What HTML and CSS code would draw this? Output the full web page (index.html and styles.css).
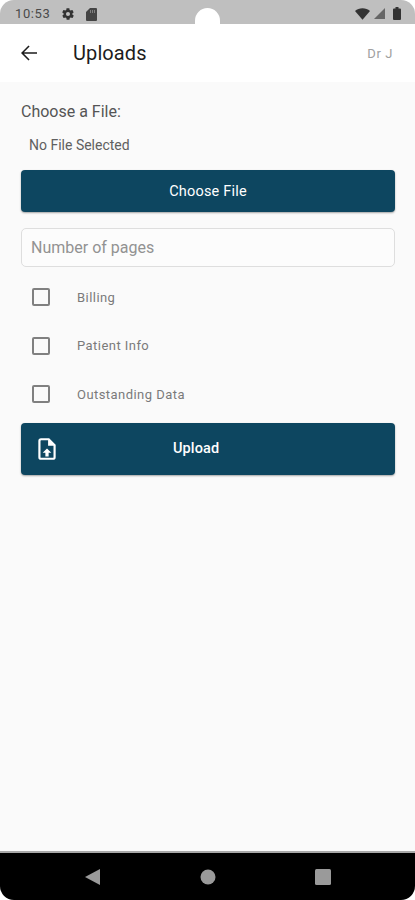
FILE: index.html
```html
<!DOCTYPE html>
<html lang="en">
<head>
<meta charset="utf-8">
<title>Uploads</title>
<link rel="stylesheet" href="styles.css">
</head>
<body>
<div class="screen">
  <div class="status">
    <div class="status-left">
      <span class="time">10:53</span>
      <svg class="s-icon" width="14" height="14" viewBox="0 0 24 24"><path fill="#333" d="M19.4 13c.1-.3.1-.7.1-1s0-.7-.1-1l2.1-1.600c.2-.2.2-.4.1-.6l-2-3.500c-.1-.2-.4-.3-.6-.2l-2.500 1c-.5-.4-1.100-.7-1.700-1l-.4-2.600c0-.3-.2-.5-.5-.5h-4c-.3 0-.5.2-.5.5l-.4 2.600c-.6.300-1.200.6-1.700 1l-2.500-1c-.2-.1-.5 0-.6.2l-2 3.500c-.1.200-.1.400.1.600L4.600 11c-.1.300-.1.700-.1 1s0 .7.100 1l-2.100 1.600c-.2.2-.2.400-.1.600l2 3.500c.1.200.4.300.6.200l2.500-1c.5.400 1.100.7 1.700 1l.4 2.600c0 .3.2.5.5.5h4c.3 0 .5-.2.5-.5l.4-2.600c.6-.3 1.200-.6 1.700-1l2.500 1c.2.100.5 0 .6-.2l2-3.500c.1-.2.1-.4-.1-.6zM12 15.500a3.500 3.500 0 1 1 0-7 3.500 3.500 0 0 1 0 7z"/></svg>
      <svg class="s-icon" width="11" height="14" viewBox="0 0 11 14"><path fill="#444" d="M4 1h6a1 1 0 0 1 1 1v11a1 1 0 0 1-1 1H1a1 1 0 0 1-1-1V5z"/><path stroke="#999" stroke-width=".7" d="M4.500 3v3M6.500 3v3M8.500 3v3"/></svg>
    </div>
    <div class="status-right">
      <svg width="15" height="12" viewBox="0 0 15 12"><path fill="#333" d="M0 3C2 1.200 4.600.3 7.500.3s5.500.9 7.500 2.700l-7.500 8.700z"/></svg>
      <svg class="signal" width="11" height="11" viewBox="0 0 11 11"><path fill="#666" d="M11 0v11H0z"/></svg>
      <svg class="battery" width="8" height="13" viewBox="0 0 8 13"><path fill="#333" d="M2.500 0h3v1.500H7a1 1 0 0 1 1 1V12a1 1 0 0 1-1 1H1a1 1 0 0 1-1-1V2.500a1 1 0 0 1 1-1h1.500z"/></svg>
    </div>
    <span class="notch"></span>
  </div>

  <header class="appbar">
    <svg class="back" width="24" height="24" viewBox="0 0 24 24"><path fill="#1c1c1c" d="M20 11.200H6.900l5.700-5.700L11.500 4.400 4 12l7.500 7.600 1.100-1.100-5.700-5.700H20z"/></svg>
    <h1 class="title">Uploads</h1>
    <span class="user">Dr J</span>
  </header>

  <main class="content">
    <p class="choose-label">Choose a File:</p>
    <p class="file-name">No File Selected</p>
    <button class="btn btn-choose">Choose File</button>
    <div class="field">Number of pages</div>
    <ul class="checks">
      <li class="check"><span class="box"></span><span class="check-label">Billing</span></li>
      <li class="check"><span class="box"></span><span class="check-label">Patient Info</span></li>
      <li class="check"><span class="box"></span><span class="check-label">Outstanding Data</span></li>
    </ul>
    <button class="btn btn-upload">
      <svg class="upload-icon" width="26" height="26" viewBox="0 0 24 24"><path fill="#fff" d="M14 2H6.500A2.500 2.500 0 0 0 4 4.500v15A2.500 2.500 0 0 0 6.500 22h11a2.500 2.500 0 0 0 2.500-2.500V8zm4 17.500a.5.5 0 0 1-.5.5h-11a.5.5 0 0 1-.5-.5v-15a.5.500 0 0 1 .5-.5H13v5h5z"/><path fill="#fff" d="M12 11.500 8 15.500h2.500V19h3v-3.500H16z"/></svg>
      <span class="upload-text">Upload</span>
    </button>
  </main>

  <nav class="navbar">
    <svg width="16" height="16" viewBox="0 0 16 16"><path fill="#9a9a9a" d="M15 0v16L0 8z"/></svg>
    <svg width="16" height="16" viewBox="0 0 16 16"><circle fill="#9a9a9a" cx="8" cy="8" r="7.500"/></svg>
    <svg width="16" height="16" viewBox="0 0 16 16"><rect fill="#9a9a9a" width="16" height="16" rx="1.500"/></svg>
  </nav>
</div>
</body>
</html>
```

FILE: styles.css
```css
* { box-sizing: border-box; }
html, body { margin: 0; padding: 0; }
body { font-family: Roboto, "Liberation Sans", sans-serif; background: #fff; }
.screen { width: 415px; height: 900px; display: flex; flex-direction: column; overflow: hidden; background: #fff; }

.status {
  position: relative;
  height: 24px;
  flex: none;
  background: #bfbfbf;
  border-radius: 14px 14px 0 0;
  display: flex;
  justify-content: space-between;
  align-items: center;
  padding: 3px 14px 0 15px;
}
.status-left { display: flex; align-items: center; gap: 11px; }
.status-right { display: flex; align-items: center; gap: 4px; }
.battery { margin-left: 4px; }
.time { font-size: 13px; color: #4a4a4a; letter-spacing: .6px; }
.s-icon { display: block; }
.notch {
  position: absolute;
  left: 195px;
  top: 8px;
  width: 25px;
  height: 26px;
  border-radius: 13px 13px 0 0;
  background: #fff;
}

.appbar {
  height: 58px;
  flex: none;
  background: #fff;
  display: flex;
  align-items: center;
  padding: 0 22px 0 17px;
}
.back { flex: none; }
.title { margin: 0 0 0 32px; font-size: 20px; font-weight: 400; letter-spacing: .1px; color: #1d1d1d; flex: 1; }
.user { font-size: 13px; color: #a0a0a0; letter-spacing: .6px; }

.content {
  flex: 1;
  background: #fafafa;
  padding: 20px 20px 0 21px;
  display: flex;
  flex-direction: column;
}
.choose-label { margin: 0; font-size: 16px; line-height: 19px; color: #555; }
.file-name { margin: 16px 0 0 8px; font-size: 14px; line-height: 16px; color: #606060; }
.btn {
  display: flex;
  align-items: center;
  width: 100%;
  border: 0;
  background: #0d4660;
  color: #fff;
  font-family: inherit;
  font-weight: 500;
  border-radius: 4px;
  box-shadow: 0 1px 2px rgba(0,0,0,.35);
  padding: 0;
}
.btn-choose { height: 42px; margin-top: 17px; justify-content: center; font-size: 14.500px; font-weight: 400; letter-spacing: .2px; }
.field {
  height: 39px;
  margin-top: 16px;
  border: 1px solid #dedede;
  border-radius: 5px;
  background: #fcfcfc;
  padding: 0 9px;
  display: flex;
  align-items: center;
  font-size: 16px;
  color: #929292;
}
.checks { list-style: none; margin: 6px 0 0; padding: 0; }
.check { height: 48.500px; display: flex; align-items: center; padding-left: 11px; }
.box { width: 18px; height: 18px; border: 2px solid #808080; border-radius: 2px; flex: none; }
.check-label { margin-left: 27px; font-size: 13px; color: #7a7a7a; letter-spacing: .45px; }
.btn-upload { height: 52px; margin-top: 4px; padding-left: 13px; font-size: 14.500px; letter-spacing: .1px; }
.upload-icon { flex: none; }
.upload-text { margin-left: 113px; }

.navbar {
  height: 49px;
  flex: none;
  background: #000;
  border-top: 2px solid #a8a8a8;
  border-radius: 0 0 14px 14px;
  display: flex;
  align-items: center;
  padding: 0 84px 0 85px;
  justify-content: space-between;
}
```
